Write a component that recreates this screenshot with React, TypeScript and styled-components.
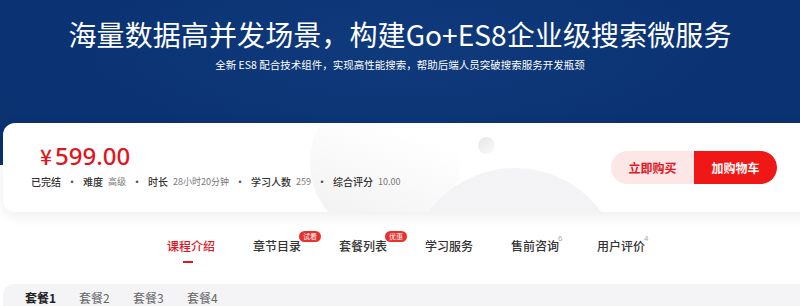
import styled, { createGlobalStyle } from "styled-components";

const GlobalStyle = createGlobalStyle`
    html, body {
        margin: 0;
        padding: 0;
        background: #ffffff;
        overflow: hidden;
    }
    body {
        font-family: "Noto Sans CJK SC", "Noto Sans", "Liberation Sans", sans-serif;
        color: #333333;
    }
`;

interface MetaItem {
    label: string;
    value?: string;
}

const metaItems: MetaItem[] = [
    { label: "已完结" },
    { label: "难度", value: "高级" },
    { label: "时长", value: "28小时20分钟" },
    { label: "学习人数", value: "259" },
    { label: "综合评分", value: "10.00" },
];

interface TabItem {
    name: string;
    badge?: string;
    count?: number;
}

const tabs: TabItem[] = [
    { name: "课程介绍" },
    { name: "章节目录", badge: "试看" },
    { name: "套餐列表", badge: "优惠" },
    { name: "学习服务" },
    { name: "售前咨询", count: 6 },
    { name: "用户评价", count: 4 },
];

const packages = ["套餐1", "套餐2", "套餐3", "套餐4"];

function App() {
    return (
        <Page>
            <GlobalStyle />
            <Banner>
                <Title>海量数据高并发场景，构建Go+ES8企业级搜索微服务</Title>
                <Subtitle>全新 ES8 配合技术组件，实现高性能搜索，帮助后端人员突破搜索服务开发瓶颈</Subtitle>
            </Banner>

            <InfoCard>
                <BigCircle />
                <SmallCircle />
                <ArcCircle />
                <PriceBlock>
                    <Price>
                        <Yen>¥</Yen>599.00
                    </Price>
                    <MetaRow>
                        {metaItems.map((item, i) => (
                            <MetaGroup key={item.label}>
                                {i > 0 && <Dot>·</Dot>}
                                <MetaLabel>{item.label}</MetaLabel>
                                {item.value && <MetaValue>{item.value}</MetaValue>}
                            </MetaGroup>
                        ))}
                    </MetaRow>
                </PriceBlock>
                <Actions>
                    <BuyButton>立即购买</BuyButton>
                    <CartButton>加购物车</CartButton>
                </Actions>
            </InfoCard>

            <TabBar>
                {tabs.map((tab, i) => (
                    <Tab key={tab.name} active={i === 0}>
                        {tab.name}
                        {tab.badge && <Badge>{tab.badge}</Badge>}
                        {tab.count !== undefined && <Count>{tab.count}</Count>}
                    </Tab>
                ))}
            </TabBar>

            <PackageBar>
                {packages.map((p, i) => (
                    <PackageTab key={p} active={i === 0}>
                        {p}
                    </PackageTab>
                ))}
            </PackageBar>
        </Page>
    );
}

const Page = styled.div`
    width: 800px;
    height: 306px;
    overflow: hidden;
    background: #ffffff;
`;

const Banner = styled.div`
    height: 165px;
    background: radial-gradient(ellipse at 50% 30%, #0f3a7c 0%, #0b3373 60%, #0a3170 100%);
    display: flex;
    flex-direction: column;
    align-items: center;
    padding-top: 15px;
    box-sizing: border-box;
    color: #ffffff;
`;

const Title = styled.h1`
    margin: 0;
    font-size: 28px;
    font-weight: 400;
    line-height: 38px;
    letter-spacing: 0.1px;
`;

const Subtitle = styled.p`
    margin: 4px 0 0;
    font-size: 10.5px;
    line-height: 16px;
    font-weight: 400;
`;

const InfoCard = styled.div`
    position: relative;
    margin: -42px 0 0 3px;
    width: 810px;
    height: 89px;
    background: #ffffff;
    border-radius: 12px;
    box-shadow: 0 4px 14px rgba(0, 0, 0, 0.07);
    overflow: hidden;
    display: flex;
    align-items: center;
    padding: 0 31px 0 28px;
    box-sizing: border-box;
`;

const BigCircle = styled.div`
    position: absolute;
    left: 307px;
    top: -35px;
    width: 150px;
    height: 150px;
    border-radius: 50%;
    background: linear-gradient(200deg, #ffffff 30%, #efeff1 100%);
`;

const SmallCircle = styled.div`
    position: absolute;
    left: 475px;
    top: 14px;
    width: 17px;
    height: 17px;
    border-radius: 50%;
    background: linear-gradient(135deg, #e6e6e9 0%, #fbfbfc 100%);
`;

const ArcCircle = styled.div`
    position: absolute;
    left: 405px;
    top: 45px;
    width: 214px;
    height: 214px;
    border-radius: 50%;
    background: linear-gradient(180deg, #f4f4f6 0%, #efeff1 100%);
`;

const PriceBlock = styled.div`
    position: relative;
    flex: 1;
    display: flex;
    flex-direction: column;
    padding-bottom: 5px;
`;

const Price = styled.div`
    color: #e3141d;
    font-family: "Noto Sans", "Liberation Sans", sans-serif;
    font-size: 24px;
    font-weight: 500;
    line-height: 28px;
    padding-left: 9px;
`;

const Yen = styled.span`
    font-family: "Noto Sans CJK SC", sans-serif;
    font-size: 21px;
    margin-right: 3px;
`;

const MetaRow = styled.div`
    display: flex;
    align-items: center;
    margin-top: 5px;
    font-size: 10px;
    line-height: 14px;
`;

const MetaGroup = styled.div`
    display: flex;
    align-items: center;
`;

const Dot = styled.span`
    color: #555555;
    width: 22px;
    text-align: center;
    font-weight: 700;
`;

const MetaLabel = styled.span`
    color: #333333;
    font-weight: 500;
`;

const MetaValue = styled.span`
    color: #777777;
    font-size: 9px;
    margin-left: 5px;
`;

const Actions = styled.div`
    position: relative;
    display: flex;
    margin-right: 5px;
`;

const ActionButton = styled.button`
    width: 83px;
    height: 33px;
    border: none;
    font-family: inherit;
    font-size: 12px;
    font-weight: 700;
    cursor: pointer;
    padding: 0;
`;

const BuyButton = styled(ActionButton)`
    background: #fde6e6;
    color: #e3141d;
    border-radius: 17px 0 0 17px;
`;

const CartButton = styled(ActionButton)`
    background: #f01717;
    color: #ffffff;
    border-radius: 0 17px 17px 0;
`;

const TabBar = styled.div`
    display: flex;
    padding-left: 167px;
    margin-top: 25px;
    height: 47px;
`;

const Tab = styled.div<{ active: boolean }>`
    position: relative;
    width: 86px;
    height: 18px;
    font-size: 12px;
    line-height: 18px;
    font-weight: 500;
    color: ${({ active }) => (active ? "#e3141d" : "#333333")};
    white-space: nowrap;
    &::after {
        content: "";
        display: ${({ active }) => (active ? "block" : "none")};
        position: absolute;
        left: 16px;
        top: 24px;
        width: 10px;
        height: 2px;
        background: #e3141d;
    }
`;

const Badge = styled.span`
    position: absolute;
    left: 46px;
    top: -6px;
    height: 11px;
    padding: 0 4px;
    border-radius: 6px;
    background: #e8302d;
    color: #ffffff;
    font-size: 7px;
    line-height: 11px;
    font-weight: 400;
`;

const Count = styled.span`
    position: absolute;
    left: 47px;
    top: -3px;
    font-family: "Liberation Sans", sans-serif;
    font-size: 8px;
    line-height: 10px;
    color: #aaaaaa;
    font-weight: 400;
`;

const PackageBar = styled.div`
    margin-left: 3px;
    height: 40px;
    background: #f4f4f6;
    border-radius: 10px 0 0 0;
    display: flex;
    gap: 17px;
    padding: 7px 0 0 22px;
    box-sizing: border-box;
`;

const PackageTab = styled.div<{ active: boolean }>`
    font-size: 12px;
    line-height: 14px;
    font-weight: ${({ active }) => (active ? 700 : 400)};
    color: ${({ active }) => (active ? "#222222" : "#666666")};
    width: 37px;
`;

export default App;
